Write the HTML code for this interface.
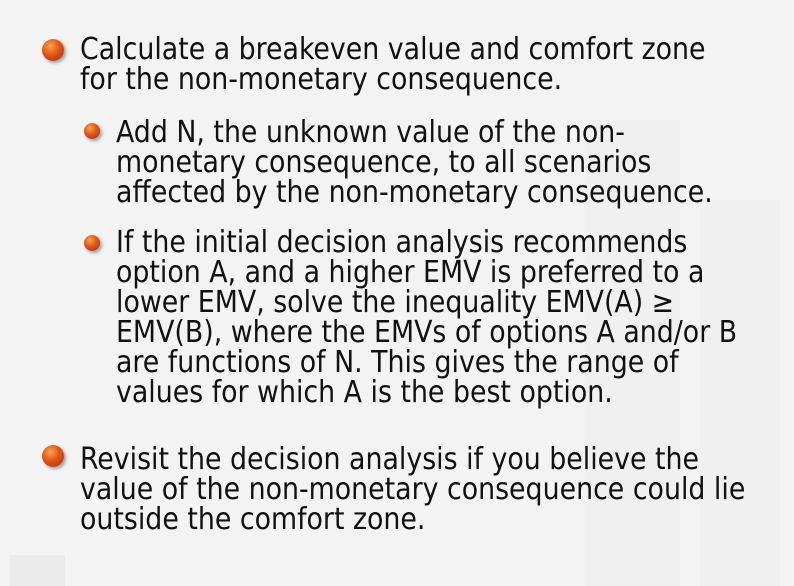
<!DOCTYPE html>
<html><head><meta charset="utf-8"><style>
body{margin:0;width:794px;height:586px;overflow:hidden;background:#f3f3f3;position:relative;font-family:"DejaVu Sans Condensed","Liberation Sans",sans-serif;color:#111}
.l{position:absolute;white-space:nowrap;font-size:29.8px;line-height:30px}
.b{position:absolute;border-radius:50%;background:radial-gradient(circle at 38% 32%,#f7a54a 0%,#e0541a 45%,#a82a08 100%);box-shadow:2px 2px 3px rgba(0,0,0,.35)}
.s{position:absolute}
</style></head><body>
<div class="s" style="left:585px;top:120px;width:95px;height:466px;background:#f0f0f0"></div>
<div class="s" style="left:700px;top:200px;width:80px;height:386px;background:#f0f0f0"></div>
<div class="s" style="left:10px;top:555px;width:55px;height:31px;background:#ebebeb"></div>
<div class="b" style="left:42px;top:39px;width:22px;height:22px"></div>
<div class="l" style="left:80px;top:35px">Calculate a breakeven value and comfort zone</div>
<div class="l" style="left:80px;top:65px">for the non-monetary consequence.</div>
<div class="b" style="left:84px;top:123px;width:16px;height:16px"></div>
<div class="l" style="left:116px;top:118px">Add N, the unknown value of the non-</div>
<div class="l" style="left:116px;top:148px">monetary consequence, to all scenarios</div>
<div class="l" style="left:116px;top:178px">affected by the non-monetary consequence.</div>
<div class="b" style="left:84px;top:235px;width:16px;height:16px"></div>
<div class="l" style="left:116px;top:228px">If the initial decision analysis recommends</div>
<div class="l" style="left:116px;top:258px">option A, and a higher EMV is preferred to a</div>
<div class="l" style="left:116px;top:288px">lower EMV, solve the inequality EMV(A) ≥</div>
<div class="l" style="left:116px;top:318px">EMV(B), where the EMVs of options A and/or B</div>
<div class="l" style="left:116px;top:348px">are functions of N. This gives the range of</div>
<div class="l" style="left:116px;top:378px">values for which A is the best option.</div>
<div class="b" style="left:42px;top:445px;width:22px;height:22px"></div>
<div class="l" style="left:80px;top:445px">Revisit the decision analysis if you believe the</div>
<div class="l" style="left:80px;top:475px">value of the non-monetary consequence could lie</div>
<div class="l" style="left:80px;top:505px">outside the comfort zone.</div>
</body></html>
